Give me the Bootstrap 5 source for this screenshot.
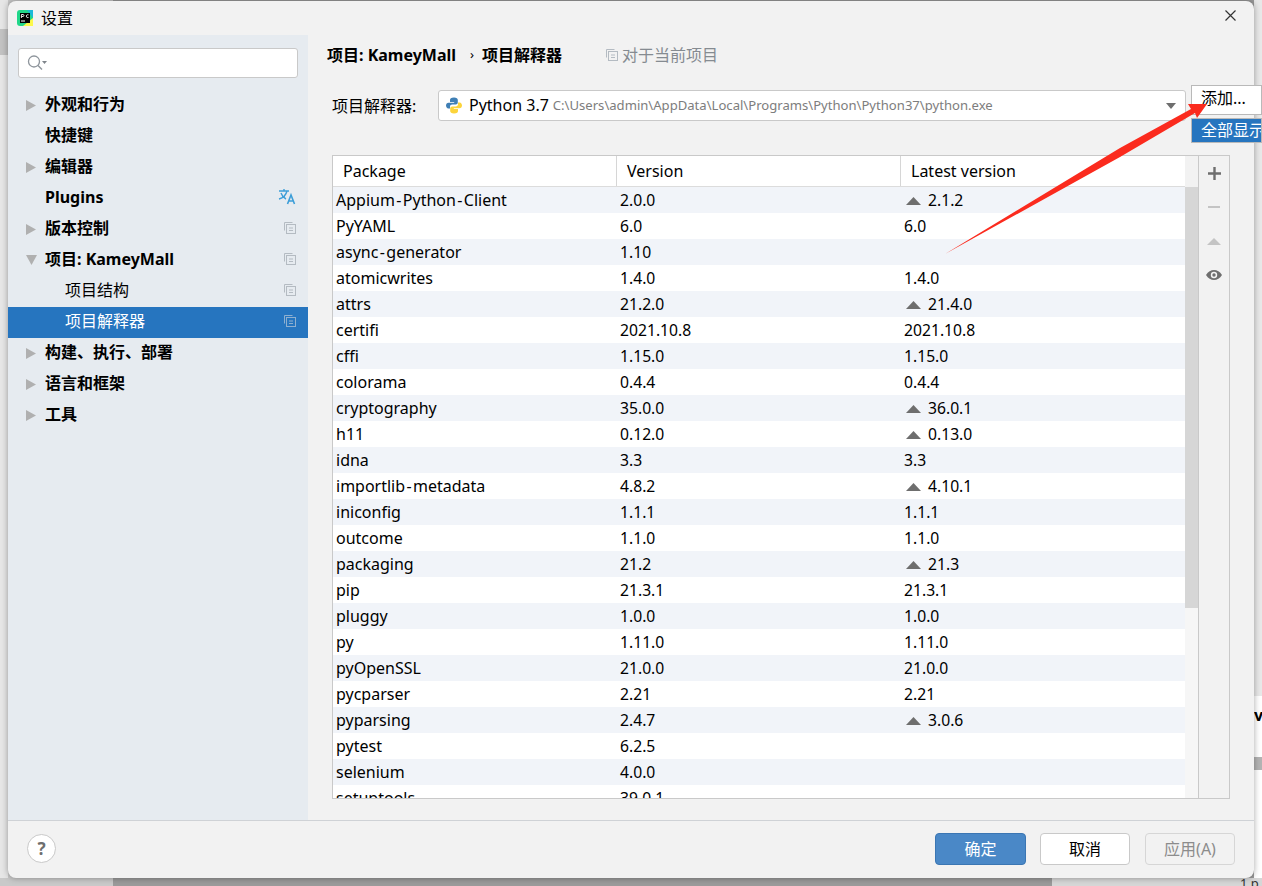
<!DOCTYPE html>
<html lang="zh">
<head>
<meta charset="utf-8">
<title>设置</title>
<link href="https://cdn.jsdelivr.net/npm/bootstrap@5.3.0/dist/css/bootstrap.min.css" rel="stylesheet">
<style>
html,body{height:100%;overflow:hidden}
body{background:linear-gradient(90deg,#c9c9c9 0,#c9c9c9 113px,#9a9a9a 113px);font-family:"Noto Sans","Noto Sans CJK SC",sans-serif;font-size:16px;color:#000;position:relative}
.shell{width:1246px;height:877px;margin:1px 0 0 8px;background:#f2f2f2;border-radius:8px;box-shadow:0 0 6px rgba(0,0,0,.35);position:relative}
.titlebar{height:34px;padding-left:9px;font-size:16px}
.titlebar .ttl{margin-left:8px}
.xbtn{margin-left:auto;margin-right:18px;margin-top:-6px}
.mainarea{height:785px}
.side{width:300px;background:#e6ebf0;flex:none}
.searchbox{margin:13px 10px 12px;height:30px;background:#fff;border:1px solid #c9c9c9;border-radius:3px;padding-left:8px}
.treerow{height:31px;padding:0 12px 4px 18px;font-weight:700;font-size:16px}
.treerow.sub{font-weight:400;padding-left:57px;padding-bottom:4px}
.treerow.sel{background:#2675bf;color:#fff}
.tri{width:19px;flex:none;display:flex;align-items:center;padding-top:3px}
.treerow>svg:last-child{margin-left:auto}
.pane{width:946px;position:relative;padding-left:19px}
.crumb{height:40px}
.crumb b{font-size:16px;font-weight:700}
.crumb .sepa{margin:0 8px 0 14px;font-size:13px}
.crumb .scope{margin-left:44px;color:#858b91;font-size:16px}
.interp{height:31px;margin:15px 0 0 5px}
.interp .lbl{width:106px;font-size:16px}
.pybox{width:748px;height:31px;background:#fff;border:1px solid #c9c9c9;border-radius:3px;padding:0 9px 0 7px;white-space:nowrap}
.pybox .pyname{margin-bottom:2px}
.pybox .pth{color:#7d7d7d;font-size:13.1px;margin-left:4px}
.pybox .carat{margin-left:auto}
.pybox .pyico{margin-right:7px}
.pkgframe{width:898px;height:644px;margin:34px 0 0 5px;border:1px solid #c9c9c9;overflow:hidden}
.tblwrap{width:852px;overflow:hidden;flex:none}
.tblbar{width:13px;flex:none;padding-top:31px}
.scrolltrack{height:100%;background:#f6f6f6}
.thumbtrack{height:421px;background:#d6d6d6}
.tools{width:31px;border-left:1px solid #c9c9c9;flex:none}
.toolbtn{height:34px;display:flex;justify-content:center;align-items:center}
.colhead{height:31px;background:#fff;border-bottom:1px solid #dcdcdc}
.colhead>div{border-right:1px solid #d6d6d6;padding:3px 0 0 10px;height:30px}
.c1,.c2{width:284px;flex:none}
.c3{flex:1}
.pkgrow{height:26px;background:#fff;line-height:26px;padding-left:3px}
.pkgrow:nth-child(odd){background:#f1f4f9}
.pkgrow .c1{width:284px}
.pkgrow .c2,.pkgrow .c3{font-size:15.7px}
.hy{padding:0 1.4px}
.up{display:inline-block;margin:0 7px 2px 2px}
.sidebtns{position:absolute;left:883px;top:50px;width:71px}
.addbtn{height:30px;background:#fff;border:1px solid #b9b9b9;padding-left:9px;font-size:16px;line-height:25px;white-space:nowrap;overflow:hidden}
.showall{height:25px;background:#2675bf;color:#fff;border:1px solid #b9b9b9;padding-left:9px;margin-top:3px;font-size:16px;line-height:23px;white-space:nowrap;overflow:hidden}
.footbar{height:58px;border-top:1px solid #cfd2d6;padding:0 19px 2px 19px}
.helpc{width:29px;height:29px;border-radius:50%;background:#fff;border:1px solid #c9c9c9;color:#6e6e6e;font-weight:700;font-size:17px;line-height:27px;text-align:center}
.dlgbtn{width:90px;height:32px;padding:0;font-size:16px;line-height:28px;border-radius:4px;margin-left:15px;box-shadow:none}
.dlgbtn.okb{width:91px;background:#4a88c7;border:1px solid #3b76b3;color:#fff;margin-left:auto}
.dlgbtn.ccl{background:#fff;border:1px solid #c9c9c9;color:#000;margin-left:14px}
.dlgbtn.apl{background:#f2f2f2;border:1px solid #d6d6d6;color:#8c8c8c}
.arrowover{position:absolute;left:0;top:0;pointer-events:none}
.behind{position:absolute;overflow:hidden;white-space:nowrap}
.bg-leftstrip{left:0;top:0;width:8px;height:878px;background:#e6e6e6}
.bg-leftblock{left:0;top:29px;width:8px;height:26px;background:#c2c2c2}
.bg-rightstrip{left:1254px;top:0;width:8px;height:696px;background:#e8e8e8}
.bg-rightlow{left:1254px;top:696px;width:8px;height:182px;background:#fff;font-weight:700;font-size:16px;padding-top:7px;line-height:24px}
.bg-rightband{left:1254px;top:757px;width:8px;height:13px;background:#b3b3b3}
.bg-corner{left:1052px;top:878px;width:210px;height:8px;background:#d6d6d6}
.bg-cornertext{left:1240px;top:875px;width:22px;height:11px;font-size:13px;line-height:16px;color:#333}
</style>
</head>
<body>
<div class="behind bg-leftstrip"></div>
<div class="behind bg-leftblock"></div>
<div class="behind bg-rightstrip"></div>
<div class="behind bg-rightlow">v</div>
<div class="behind bg-rightband"></div>
<div class="behind bg-corner"></div>
<div class="behind bg-cornertext">1 p</div>
<div class="shell d-flex flex-column">
  <div class="titlebar d-flex align-items-center">
    <svg width="16" height="16" viewBox="0 0 16 16"><rect width="16" height="16" rx="3" fill="#21d789"/><path d="M10 0h6v8z" fill="#1ab8d8"/><path d="M16 8v8H6z" fill="#fcf84a"/><rect x="3" y="3" width="10" height="10" fill="#000"/><rect x="4" y="10.500" width="4" height="1" fill="#fff"/><path d="M4.400 4.500h1.800c1 0 1 2 0 2H4.600M4.400 4.500v3.500M11.500 4.800h-1.300c-1.100 0-1.100 2.700 0 2.700h1.300" stroke="#fff" fill="none" stroke-width=".9"/></svg>
    <span class="ttl">设置</span>
    <svg class="xbtn" width="11" height="11" viewBox="0 0 11 11"><path d="M.5.500l10 10M10.500.5l-10 10" stroke="#333" stroke-width="1.200"/></svg>
  </div>
  <div class="mainarea d-flex">
    <div class="side d-flex flex-column">
      <div class="searchbox d-flex align-items-center">
        <svg width="22" height="18" viewBox="0 0 22 18"><circle cx="7" cy="7.500" r="5.500" fill="none" stroke="#8e959c" stroke-width="1.300"/><path d="M11 11.500l4 4" stroke="#8e959c" stroke-width="1.500"/><path d="M15 7h5l-2.500 3z" fill="#7f858b"/></svg>
      </div>
      <div class="treerow d-flex align-items-center"><span class="tri"><svg width="10" height="11" viewBox="0 0 10 11"><path d="M0 0l10 5.500L0 11z" fill="#b0b0b0"/></svg></span><span>外观和行为</span></div>
      <div class="treerow d-flex align-items-center"><span class="tri"></span><span>快捷键</span></div>
      <div class="treerow d-flex align-items-center"><span class="tri"><svg width="10" height="11" viewBox="0 0 10 11"><path d="M0 0l10 5.500L0 11z" fill="#b0b0b0"/></svg></span><span>编辑器</span></div>
      <div class="treerow d-flex align-items-center"><span class="tri"></span><span>Plugins</span><svg width="18" height="17" viewBox="0 0 18 17"><path d="M1 3h10M6 1v2M9 3c-1 4-4 7-8 8M3 5c1 3 3 5 5 6" fill="none" stroke="#3d9ed8" stroke-width="1.400"/><path d="M9.500 16l3.500-9 3.500 9M10.800 13h4.400" fill="none" stroke="#3d9ed8" stroke-width="1.600"/></svg></div>
      <div class="treerow d-flex align-items-center"><span class="tri"><svg width="10" height="11" viewBox="0 0 10 11"><path d="M0 0l10 5.500L0 11z" fill="#b0b0b0"/></svg></span><span>版本控制</span><svg width="12" height="12" viewBox="0 0 12 12"><path d="M.5 8.500V.5h8" fill="none" stroke="#b4bbc2"/><rect x="2.500" y="2.500" width="9" height="9" fill="none" stroke="#b4bbc2"/><path d="M5 6h4M5 8.500h4" stroke="#b4bbc2"/></svg></div>
      <div class="treerow d-flex align-items-center"><span class="tri"><svg width="11" height="10" viewBox="0 0 11 10"><path d="M0 0h11L5.500 10z" fill="#b0b0b0"/></svg></span><span>项目: KameyMall</span><svg width="12" height="12" viewBox="0 0 12 12"><path d="M.5 8.500V.5h8" fill="none" stroke="#b4bbc2"/><rect x="2.500" y="2.500" width="9" height="9" fill="none" stroke="#b4bbc2"/><path d="M5 6h4M5 8.500h4" stroke="#b4bbc2"/></svg></div>
      <div class="treerow sub d-flex align-items-center"><span>项目结构</span><svg width="12" height="12" viewBox="0 0 12 12"><path d="M.5 8.500V.5h8" fill="none" stroke="#b4bbc2"/><rect x="2.500" y="2.500" width="9" height="9" fill="none" stroke="#b4bbc2"/><path d="M5 6h4M5 8.500h4" stroke="#b4bbc2"/></svg></div>
      <div class="treerow sub sel d-flex align-items-center"><span>项目解释器</span><svg width="12" height="12" viewBox="0 0 12 12"><path d="M.5 8.500V.5h8" fill="none" stroke="#8fb0d0"/><rect x="2.500" y="2.500" width="9" height="9" fill="none" stroke="#8fb0d0"/><path d="M5 6h4M5 8.500h4" stroke="#8fb0d0"/></svg></div>
      <div class="treerow d-flex align-items-center"><span class="tri"><svg width="10" height="11" viewBox="0 0 10 11"><path d="M0 0l10 5.500L0 11z" fill="#b0b0b0"/></svg></span><span>构建、执行、部署</span></div>
      <div class="treerow d-flex align-items-center"><span class="tri"><svg width="10" height="11" viewBox="0 0 10 11"><path d="M0 0l10 5.500L0 11z" fill="#b0b0b0"/></svg></span><span>语言和框架</span></div>
      <div class="treerow d-flex align-items-center"><span class="tri"><svg width="10" height="11" viewBox="0 0 10 11"><path d="M0 0l10 5.500L0 11z" fill="#b0b0b0"/></svg></span><span>工具</span></div>
    </div>
    <div class="pane">
      <div class="crumb d-flex align-items-center"><b>项目: KameyMall</b><span class="sepa">›</span><b>项目解释器</b><span class="scope d-flex align-items-center gap-1"><svg width="12" height="12" viewBox="0 0 12 12"><path d="M.5 8.500V.5h8" fill="none" stroke="#b4bbc2"/><rect x="2.500" y="2.500" width="9" height="9" fill="none" stroke="#b4bbc2"/><path d="M5 6h4M5 8.500h4" stroke="#b4bbc2"/></svg>对于当前项目</span></div>
      <div class="interp d-flex align-items-center">
        <span class="lbl">项目解释器:</span>
        <div class="pybox d-flex align-items-center">
          <svg class="pyico" width="16" height="17" viewBox="0 0 16 17"><path d="M8 .5c-3 0-4 1-4 2.500V5h4.200v.7H2.500C1 5.700 0 7 0 8.500s1 3 2.300 3H4V9.700c0-1.300 1-2.200 2.200-2.200h3.600c1.100 0 2-.9 2-2V3C11.800 1.500 10.500.5 8 .5z" fill="#3f7fb5"/><path d="M8 16.500c3 0 4-1 4-2.500v-2H7.800v-.7h5.700c1.500 0 2.500-1.300 2.500-2.800s-1-3-2.300-3H12v1.800c0 1.300-1 2.200-2.200 2.200H6.200c-1.100 0-2 .9-2 2V14c0 1.500 1.300 2.500 3.800 2.500z" fill="#fcd43b"/></svg>
          <span class="pyname">Python 3.7</span><span class="pth">C:\Users\admin\AppData\Local\Programs\Python\Python37\python.exe</span>
          <svg class="carat" width="10" height="6" viewBox="0 0 10 6"><path d="M0 0h10L5 6z" fill="#6e6e6e"/></svg>
        </div>
      </div>
      <div class="pkgframe d-flex">
        <div class="tblwrap">
          <div class="colhead d-flex"><div class="c1">Package</div><div class="c2">Version</div><div class="c3 border-0">Latest version</div></div>
          <div id="pkgrows"></div>
        </div>
        <div class="tblbar"><div class="scrolltrack"><div class="thumbtrack"></div></div></div>
        <div class="tools">
          <div class="toolbtn"><svg width="15" height="15" viewBox="0 0 15 15"><path d="M7.500 1v13M1 7.500h13" stroke="#6e6e6e" stroke-width="2.400"/></svg></div>
          <div class="toolbtn"><svg width="14" height="14" viewBox="0 0 14 14"><path d="M1 7h12" stroke="#c4c4c4" stroke-width="2"/></svg></div>
          <div class="toolbtn"><svg width="14" height="14" viewBox="0 0 14 14"><path d="M0 11L7 4l7 7z" fill="#c4c4c4"/></svg></div>
          <div class="toolbtn"><svg width="16" height="14" viewBox="0 0 16 14"><path d="M0 7c2-3.500 5-5 8-5s6 1.500 8 5c-2 3.500-5 5-8 5s-6-1.500-8-5z" fill="#6e6e6e"/><circle cx="8" cy="7" r="3.200" fill="#f2f2f2"/><circle cx="8" cy="7" r="1.700" fill="#6e6e6e"/></svg></div>
        </div>
      </div>
      <div class="sidebtns"><div class="addbtn">添加...</div><div class="showall">全部显示...</div></div>
    </div>
  </div>
  <div class="footbar d-flex align-items-center">
    <div class="helpc">?</div>
    <button class="btn dlgbtn okb">确定</button>
    <button class="btn dlgbtn ccl">取消</button>
    <button class="btn dlgbtn apl">应用(A)</button>
  </div>
</div>
<svg class="arrowover" width="1262" height="886" viewBox="0 0 1262 886"><path d="M945 254L1120 148 1191 109 1188 104 1207 104 1197 118 1195 113 1120 157z" fill="#fb2b1e"/></svg>
<script>
const d=[["Appium-Python-Client","2.0.0","2.1.2",1],["PyYAML","6.0","6.0"],["async-generator","1.10",""],["atomicwrites","1.4.0","1.4.0"],["attrs","21.2.0","21.4.0",1],["certifi","2021.10.8","2021.10.8"],["cffi","1.15.0","1.15.0"],["colorama","0.4.4","0.4.4"],["cryptography","35.0.0","36.0.1",1],["h11","0.12.0","0.13.0",1],["idna","3.3","3.3"],["importlib-metadata","4.8.2","4.10.1",1],["iniconfig","1.1.1","1.1.1"],["outcome","1.1.0","1.1.0"],["packaging","21.2","21.3",1],["pip","21.3.1","21.3.1"],["pluggy","1.0.0","1.0.0"],["py","1.11.0","1.11.0"],["pyOpenSSL","21.0.0","21.0.0"],["pycparser","2.21","2.21"],["pyparsing","2.4.7","3.0.6",1],["pytest","6.2.5",""],["selenium","4.0.0",""],["setuptools","39.0.1",""]];
const tri='<svg class="up" width="15" height="8" viewBox="0 0 15 8"><path d="M0 8L7.500 0 15 8z" fill="#6e6e6e"/></svg>';
document.getElementById('pkgrows').innerHTML=d.map(r=>`<div class="pkgrow d-flex"><div class="c1">${r[0].replace(/-/g,'<span class="hy">-</span>')}</div><div class="c2">${r[1]}</div><div class="c3">${r[3]?tri:''}${r[2]}</div></div>`).join('');
</script>
<script src="https://cdn.jsdelivr.net/npm/bootstrap@5.3.0/dist/js/bootstrap.bundle.min.js"></script>
</body>
</html>
